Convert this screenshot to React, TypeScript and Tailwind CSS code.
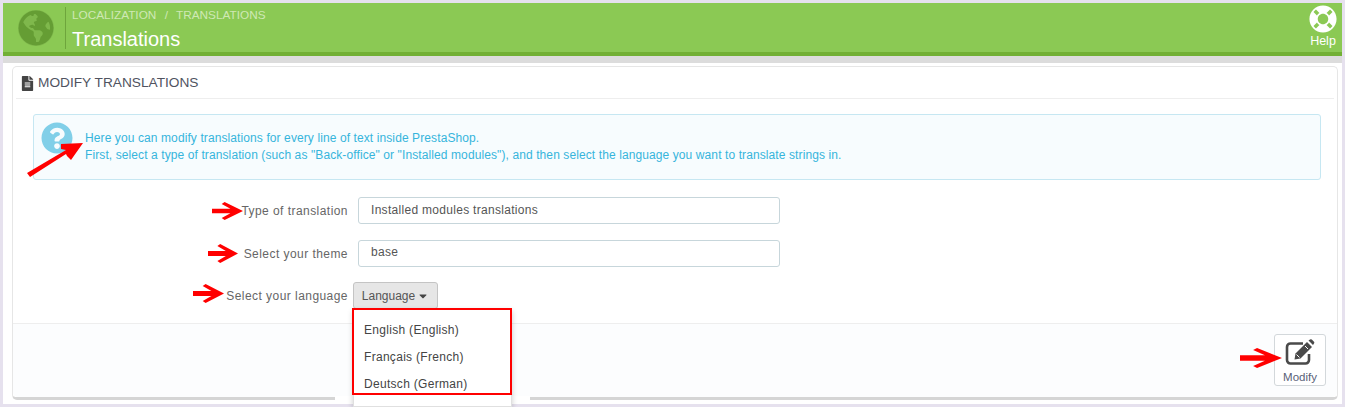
import React from 'react';
import { FaGlobeAmericas, FaFileAlt, FaLifeRing, FaQuestionCircle, FaCaretDown } from 'react-icons/fa';

const Arrow: React.FC<{ className: string }> = ({ className }) => (
  <svg viewBox="0 0 32 19" preserveAspectRatio="none" className={`absolute ${className}`}>
    <path d="M0 7h19L10 2l3-2 19 9.500-19 9.500-3-2 9-5H0z" fill="#f00" />
  </svg>
);

const EditIcon = () => (
  <svg viewBox="0 0 30 30" className="w-[30px] h-[30px]">
    <path d="M24 15v6a3.500 3.500 0 0 1-3.500 3.500H5.500A3.500 3.500 0 0 1 2 21V8a3.500 3.500 0 0 1 3.500-3.500H18" fill="none" stroke="#4a4a4a" strokeWidth="2.600" />
    <path d="M9.500 20.500l1-6L22 3l5 5-11.500 11.500z" fill="#4a4a4a" />
    <path d="M23.500 1.500l1.500-1a1.500 1.500 0 0 1 1.800 0l2.200 2.200a1.500 1.500 0 0 1 0 1.800l-1 1.500z" fill="#4a4a4a" />
    <path d="M11.500 15.500l3 3M20 7l3 3" stroke="#fff" strokeWidth="1" />
  </svg>
);

const Row: React.FC<{ label: string; value: string; mb: string; pb: string }> = ({ label, value, mb, pb }) => (
  <div className={`flex items-center ${mb}`}>
    <label className="w-[335px] text-right text-[12px] text-[#666] tracking-[0.45px]">{label}</label>
    <div className={`ml-[10px] w-[422px] h-[27px] border border-[#c7d6db] rounded-[3px] bg-white pl-[12px] ${pb} flex items-center text-[12px] text-[#555] tracking-[0.3px]`}>
      {value}
    </div>
  </div>
);

export default function App() {
  return (
    <div className="relative w-[1345px] h-[407px] overflow-hidden bg-[#e6e1ee] pl-[3px] pr-[3px] pt-[3px] font-['Liberation_Sans',Arial,sans-serif]">
      {/* page header */}
      <header className="h-[53px] bg-[#8bc954] border-b-[4px] border-[#72b035] flex items-center text-white">
        <div className="w-[62px] h-full flex items-center pl-[15px] shrink-0">
          <FaGlobeAmericas className="text-[36px] text-[#659d34] bg-[#7fb84c] rounded-full" />
        </div>
        <div className="border-l border-[#6ea53c] h-[42px] pl-[6px] flex-1">
          <div className="text-[11.8px] leading-[14px] text-[#cfe8b4] mt-[1px]">
            LOCALIZATION <span className="mx-[5px]">/</span> TRANSLATIONS
          </div>
          <h1 className="text-[20px] leading-[24px] mt-[5px]">Translations</h1>
        </div>
        <div className="w-[36px] mr-[1px] -mt-[4px] flex flex-col items-center">
          <FaLifeRing className="text-[28px]" />
          <span className="text-[12.5px] leading-[12px] mt-[2px]">Help</span>
        </div>
      </header>

      <div className="h-[7px] bg-[#dcdcdc]" />

      <main className="bg-white h-[341px] pl-[9px] pr-[4px] pt-[3px]">
        {/* panel */}
        <section className="h-[334px] border border-[#e6e6e6] border-b-[3px] border-b-[#d5d5d5] rounded-[5px] relative">
          <h2 className="mx-[3px] h-[32px] border-b border-[#eeeeee] flex items-center text-[13.7px] text-[#50535f] pt-[2px]">
            <FaFileAlt className="text-[15px] ml-[4px] mr-[3px] text-[#444]" />
            MODIFY TRANSLATIONS
          </h2>

          <div className="ml-[20px] mr-[16px] mt-[15px] h-[66px] border border-[#c6e7f2] rounded-[3px] bg-[#f7fcfe] flex items-center text-[12px] leading-[17px] text-[#36b5dc] tracking-[0.1px]">
            <FaQuestionCircle className="text-[32px] text-[#81cfe8] ml-[7px] mr-[12px] -mt-[18px] shrink-0" />
            <div>
              <p>Here you can modify translations for every line of text inside PrestaShop.</p>
              <p>First, select a type of translation (such as "Back-office" or "Installed modules"), and then select the language you want to translate strings in.</p>
            </div>
          </div>

          <div className="mt-[17px]">
            <Row label="Type of translation" value="Installed modules translations" mb="mb-[16px]" pb="pb-[2px]" />
            <Row label="Select your theme" value="base" mb="mb-[15px]" pb="pb-[4px]" />
            <div className="flex items-center">
              <label className="w-[335px] text-right text-[12px] text-[#666] tracking-[0.45px]">Select your language</label>
              <div className="ml-[5px] w-[85px] h-[27px] bg-[#e6e6e6] border border-[#c4c4c4] rounded-[3px] flex items-center justify-center text-[12px] text-[#555]">
                Language <FaCaretDown className="text-[12px] ml-[2px] text-[#444]" />
              </div>
            </div>
          </div>

          <footer className="absolute left-0 right-0 bottom-0 top-[256px] border-t border-[#eeeeee] bg-[#fcfdfe] rounded-b-[5px] flex justify-end pt-[10px] pr-[11px]">
            <div className="w-[52px] h-[52px] bg-white border border-[#d3d8db] rounded-[3px] flex flex-col items-center pt-[4px] text-[11.500px] leading-[13px] text-[#5a5f78]">
              <EditIcon />
              <span className="mt-[2px]">Modify</span>
            </div>
          </footer>
        </section>
      </main>

      {/* gap in the panel's bottom line round the open dropdown */}
      <div className="absolute left-[335px] top-[396px] w-[195px] h-[6px] bg-white" />

      {/* open dropdown */}
      <div className="absolute left-[353px] top-[309px] w-[159px] h-[98px] bg-white shadow-[0_2px_6px_rgba(0,0,0,0.2)] border border-[#e0e0e0] pt-[11px] pl-[10px] text-[12px] text-[#444] tracking-[0.3px]">
        <div className="h-[27px]">English (English)</div>
        <div className="h-[27px]">Français (French)</div>
        <div className="h-[27px]">Deutsch (German)</div>
      </div>
      <div className="absolute left-[352px] top-[308px] w-[160px] h-[87px] border-[2px] border-[#f00]" />

      {/* annotation arrows */}
      <svg viewBox="26 140 60 40" className="absolute left-[26px] top-[140px] w-[60px] h-[40px]">
        <path d="M27 173L66 150 61 149 61 144 83 143 71 160 67 156 66 154 30 177Z" fill="#f00" />
      </svg>
      <Arrow className="left-[212px] top-[202px] w-[31px] h-[18px]" />
      <Arrow className="left-[208px] top-[244px] w-[30px] h-[19px]" />
      <Arrow className="left-[193px] top-[284px] w-[31px] h-[19px]" />
      <Arrow className="left-[1240px] top-[348px] w-[42px] h-[20px]" />
    </div>
  );
}
